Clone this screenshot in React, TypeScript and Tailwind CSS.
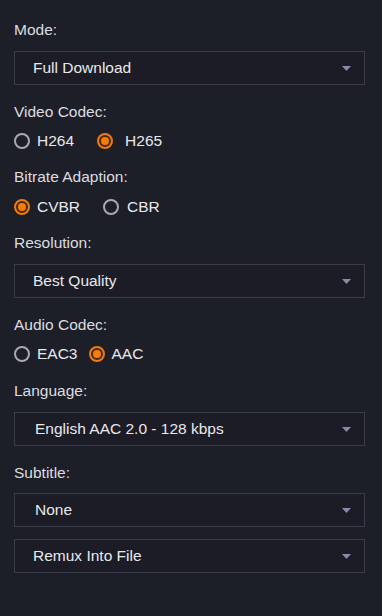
import React from 'react'

interface SelectProps {
	value: string
	className?: string
	textPad?: string
}

function Select({ value, className = '', textPad = 'pl-[18px]' }: SelectProps) {
	return (
		<div
			className={`flex items-center justify-between h-[34px] border border-[#3b3c4b] bg-[#1b1c25] ${textPad} pr-[13px] ${className}`}
		>
			<span className="text-[15.5px] text-[#e8e8ec]">{value}</span>
			<svg width="9" height="5" viewBox="0 0 9 5" className="mt-px">
				<path d="M0 0 L9 0 L4.5 5 Z" fill="#8b88aa" />
			</svg>
		</div>
	)
}

interface RadioProps {
	label: string
	checked?: boolean
	className?: string
	gap?: string
}

function Radio({ label, checked, className = '', gap = 'gap-[7px]' }: RadioProps) {
	return (
		<label className={`flex items-center ${gap} ${className}`}>
			{checked ? (
				<span className="w-4 h-4 rounded-full border-2 border-[#f07a0c] bg-[#4a2a12] flex items-center justify-center">
					<span className="w-2 h-2 rounded-full bg-[#f57d0a]" />
				</span>
			) : (
				<span className="w-4 h-4 rounded-full border-2 border-[#a9a9ad]" />
			)}
			<span className="text-[15.5px] text-[#e8e8ec]">{label}</span>
		</label>
	)
}

function Label({ children, className = '' }: { children: React.ReactNode; className?: string }) {
	return <div className={`h-5 leading-5 text-[15.5px] text-[#dcdce0] ${className}`}>{children}</div>
}

export default function App() {
	return (
		<div
			className="w-[382px] h-[616px] bg-[#1d1f28] pl-[14px] pr-[17px] pt-5 flex flex-col"
			style={{ fontFamily: '"Liberation Sans", Arial, sans-serif' }}
		>
			<Label>Mode:</Label>
			<Select value="Full Download" className="mt-[11px]" />

			<Label className="mt-[17px]">Video Codec:</Label>
			<div className="flex items-center h-5 mt-[9px]">
				<Radio label="H264" />
				<Radio label="H265" checked gap="gap-[12px]" className="ml-[23px]" />
			</div>

			<Label className="mt-[16px]">Bitrate Adaption:</Label>
			<div className="flex items-center h-5 mt-[10px]">
				<Radio label="CVBR" checked />
				<Radio label="CBR" gap="gap-[8px]" className="ml-[23px]" />
			</div>

			<Label className="mt-[16px]">Resolution:</Label>
			<Select value="Best Quality" className="mt-[11px]" />

			<Label className="mt-[17px]">Audio Codec:</Label>
			<div className="flex items-center h-5 mt-[9px]">
				<Radio label="EAC3" />
				<Radio label="AAC" checked className="ml-[11px]" />
			</div>

			<Label className="mt-[17px]">Language:</Label>
			<Select value="English AAC 2.0 - 128 kbps" className="mt-[11px]" textPad="pl-[20px]" />

			<Label className="mt-[17px]">Subtitle:</Label>
			<Select value="None" className="mt-[10px]" textPad="pl-[20px]" />
			<Select value="Remux Into File" className="mt-[12px]" />
		</div>
	)
}
